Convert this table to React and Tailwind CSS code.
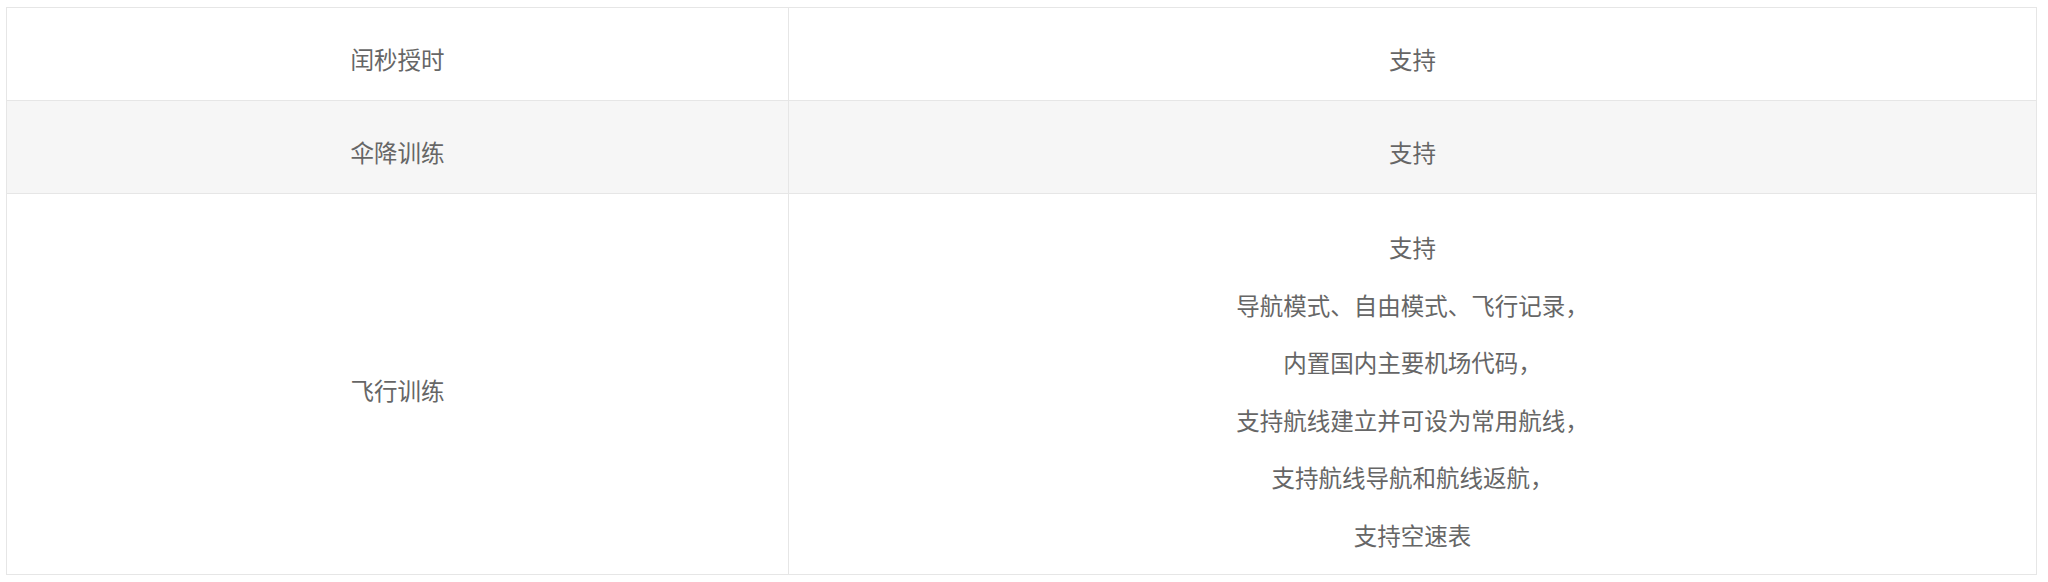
import React from 'react';

const rows = [
  { label: '闰秒授时', lines: ['支持'], bg: 'bg-white' },
  { label: '伞降训练', lines: ['支持'], bg: 'bg-[#f6f6f6]' },
  {
    label: '飞行训练',
    lines: [
      '支持',
      '导航模式、自由模式、飞行记录，',
      '内置国内主要机场代码，',
      '支持航线建立并可设为常用航线，',
      '支持航线导航和航线返航，',
      '支持空速表',
    ],
    bg: 'bg-white',
  },
];

const App = () => {
  return (
    <div className="w-[2048px] h-[582px] bg-white pt-[7px] pl-[6px] font-['Noto_Sans_CJK_SC','Noto_Sans',sans-serif] text-[23.5px] text-[#666666]">
      <div className="w-[2031px] border-t border-l border-[#e6e6e6]">
        {rows.map((row) => {
          const multi = row.lines.length > 1;
          return (
            <div key={row.label} className={`grid grid-cols-[782px_1fr] ${row.bg}`}>
              {/* label cell */}
              <div
                className={`flex items-center justify-center border-r border-b border-[#e6e6e6] ${
                  multi ? 'h-[381px] pt-[14px]' : 'h-[93px] pt-[12px]'
                }`}
              >
                {row.label}
              </div>
              {/* value cell */}
              {multi ? (
                <div className="h-[381px] pt-[25px] border-r border-b border-[#e6e6e6] text-center leading-[57.6px]">
                  {row.lines.map((line) => (
                    <p key={line}>{line}</p>
                  ))}
                </div>
              ) : (
                <div className="h-[93px] pt-[12px] flex items-center justify-center border-r border-b border-[#e6e6e6]">
                  {row.lines[0]}
                </div>
              )}
            </div>
          );
        })}
      </div>
    </div>
  );
};

export default App;
